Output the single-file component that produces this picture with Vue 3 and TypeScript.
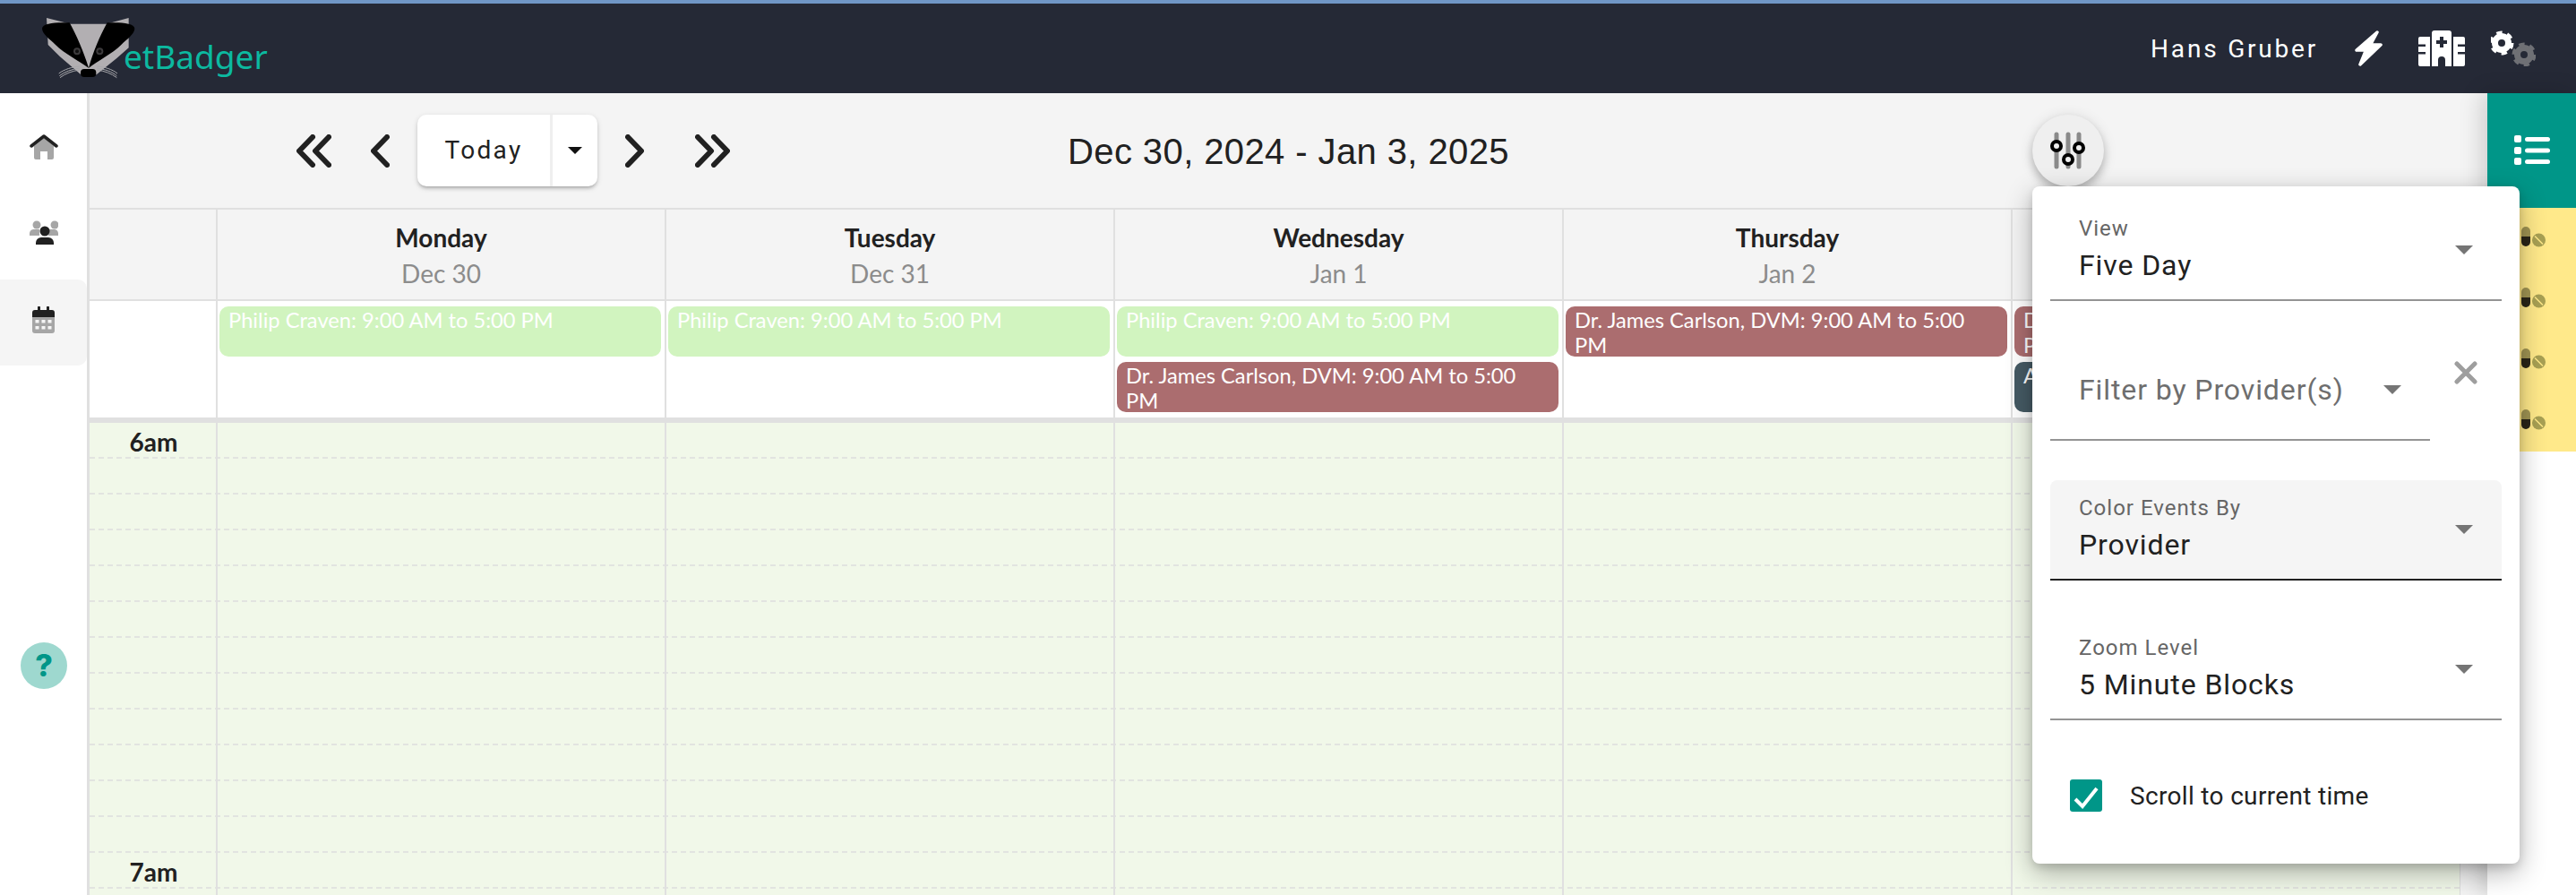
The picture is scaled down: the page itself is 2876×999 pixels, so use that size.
<script setup lang="ts">
interface Ev { text: string; kind: string }
interface Day { name: string; date: string; events: Ev[] }
const philip = 'Philip Craven: 9:00 AM to 5:00 PM'
const james = 'Dr. James Carlson, DVM: 9:00 AM to 5:00 PM'
const days: Day[] = [
  { name: 'Monday', date: 'Dec 30', events: [{ text: philip, kind: 'green' }] },
  { name: 'Tuesday', date: 'Dec 31', events: [{ text: philip, kind: 'green' }] },
  { name: 'Wednesday', date: 'Jan 1', events: [{ text: philip, kind: 'green' }, { text: james, kind: 'red' }] },
  { name: 'Thursday', date: 'Jan 2', events: [{ text: james, kind: 'red' }] },
  { name: '', date: '', events: [{ text: james, kind: 'red' }, { text: 'A', kind: 'slate' }] },
]
const rows: string[] = Array.from({ length: 14 }, (_, i) => (i === 0 ? '6am' : i === 12 ? '7am' : ''))
</script>

<template>
  <div class="app">
    <header class="topbar">
      <div class="brand">
        <svg class="badger" width="104" height="68" viewBox="140 60 312 204">
          <path d="M155 60 L235 80 H355 L430 60 V160 L390 195 L322 250 H270 L200 190 L160 150 Z" fill="#b2afb2" />
          <path d="M232 76 C190 74 140 76 140 96 C142 116 165 130 185 150 C215 180 265 205 296 228 C278 170 258 125 232 76 Z" fill="#000" />
          <path d="M358 76 C400 74 450 76 450 96 C448 116 425 130 405 150 C375 180 325 205 296 228 C312 170 332 125 358 76 Z" fill="#000" />
          <circle cx="257" cy="172" r="12" fill="#3c3a3c" /><circle cx="257" cy="172" r="6" fill="#111" />
          <circle cx="333" cy="172" r="12" fill="#3c3a3c" /><circle cx="333" cy="172" r="6" fill="#111" />
          <rect x="269" y="231" width="52" height="27" rx="12" fill="#000" />
          <g fill="none" stroke="#a8a8ac" stroke-width="3">
            <path d="M266 222 C240 224 215 232 196 246" /><path d="M266 228 C240 232 215 240 198 254" /><path d="M266 234 C240 238 218 246 200 260" />
            <path d="M324 222 C350 224 375 232 392 246" /><path d="M324 228 C350 232 375 240 390 254" /><path d="M324 234 C350 238 372 246 390 260" />
          </g>
        </svg>
        <span class="brand-text">etBadger</span>
      </div>
      <div class="user">
        <span class="user-name">Hans Gruber</span>
        <svg class="bolt" width="31" height="40" viewBox="0 0 31 40"><path d="M25 2 L2 22 H12.5 L6 38 L29 16 H17.5 Z" fill="#fff" stroke="#fff" stroke-width="3.5" stroke-linejoin="round" /></svg>
        <svg class="hospital" width="52" height="40" viewBox="0 0 52 40">
          <path d="M2 7 H13 V40 H2 a2 2 0 0 1 -2 -2 V9 a2 2 0 0 1 2 -2 Z M39 7 H50 a2 2 0 0 1 2 2 V38 a2 2 0 0 1 -2 2 H39 Z" fill="#fff" />
          <path d="M18 0 H34 a3 3 0 0 1 3 3 V40 H15 V3 a3 3 0 0 1 3 -3 Z" fill="#fff" />
          <path d="M24 7 h4 v4 h4 v4 h-4 v4 h-4 v-4 h-4 v-4 h4 Z M22 40 V33 a4 4 0 0 1 8 0 V40 Z M0 15.5 h8 v2.5 h-8 Z M0 24 h8 v2.5 h-8 Z M44 15.5 h8 v2.5 h-8 Z M44 24 h8 v2.5 h-8 Z" fill="#252936" />
        </svg>
        <svg class="gears" width="50" height="40" viewBox="0 0 50 40">
          <g fill="none">
            <circle cx="37" cy="27" r="7.5" stroke="#6f7075" stroke-width="7" />
            <circle cx="37" cy="27" r="11" stroke="#6f7075" stroke-width="5" stroke-dasharray="6 5.52" />
            <circle cx="12" cy="14" r="7.5" stroke="#fff" stroke-width="7" />
            <circle cx="12" cy="14" r="11" stroke="#fff" stroke-width="5" stroke-dasharray="6 5.52" />
          </g>
        </svg>
      </div>
    </header>

    <div class="body">
      <nav class="sidebar">
        <div class="side-item">
          <svg width="32" height="30" viewBox="0 0 32 30">
            <path d="M5 14 L16 5 L27 14 V27 a2 2 0 0 1 -2 2 H20 V20 H12 V29 H7 a2 2 0 0 1 -2 -2 Z" fill="#a6a6a6" />
            <path d="M2 14 L16 3 L30 14" fill="none" stroke="#212121" stroke-width="3.5" stroke-linecap="round" stroke-linejoin="round" />
          </svg>
        </div>
        <div class="side-item shifted">
          <svg width="32" height="30" viewBox="0 0 32 30">
            <circle cx="8" cy="6" r="4.5" fill="#a6a6a6" /><circle cx="28" cy="6" r="4.5" fill="#a6a6a6" />
            <path d="M0 18 V15 a5 5 0 0 1 5 -4 H11 V18 Z M21 11 H27 a5 5 0 0 1 5 4 V18 H21 Z" fill="#a6a6a6" />
            <circle cx="17" cy="13" r="5.5" fill="#212121" />
            <path d="M7 28 V26 a6 6 0 0 1 6 -6 H21 a6 6 0 0 1 6 6 V28 Z" fill="#212121" />
          </svg>
        </div>
        <div class="side-item active">
          <svg width="26" height="30" viewBox="0 0 26 30">
            <path d="M0 12 H25 V27 a3 3 0 0 1 -3 3 H3 a3 3 0 0 1 -3 -3 Z" fill="#a6a6a6" />
            <path d="M3 4 H6 V1 a1 1 0 0 1 3 0 V4 H16 V1 a1 1 0 0 1 3 0 V4 H22 a3 3 0 0 1 3 3 V12 H0 V7 a3 3 0 0 1 3 -3 Z" fill="#212121" />
            <g fill="#f5f5f5"><rect x="3.5" y="15" width="4" height="3.5" /><rect x="10.5" y="15" width="4" height="3.5" /><rect x="17.5" y="15" width="4" height="3.5" /><rect x="3.5" y="22" width="4" height="3.5" /><rect x="10.5" y="22" width="4" height="3.5" /><rect x="17.5" y="22" width="4" height="3.5" /></g>
          </svg>
        </div>
        <div class="help">?</div>
      </nav>

      <main class="main">
        <div class="toolbar">
          <div class="nav">
            <svg class="nav-dbl" width="39" height="37" viewBox="0 0 39 37"><path d="M18 3 L3 18.5 L18 34 M36 3 L21 18.5 L36 34" fill="none" stroke="#212121" stroke-width="6" stroke-linecap="round" stroke-linejoin="round" /></svg>
            <svg class="nav-one" width="21" height="37" viewBox="0 0 21 37"><path d="M18 3 L3 18.5 L18 34" fill="none" stroke="#212121" stroke-width="6" stroke-linecap="round" stroke-linejoin="round" /></svg>
            <div class="today">
              <span class="today-text">Today</span>
              <span class="today-drop"><i class="tri small"></i></span>
            </div>
            <svg class="nav-one right" width="21" height="37" viewBox="0 0 21 37"><path d="M3 3 L18 18.5 L3 34" fill="none" stroke="#212121" stroke-width="6" stroke-linecap="round" stroke-linejoin="round" /></svg>
            <svg class="nav-dbl right" width="39" height="37" viewBox="0 0 39 37"><path d="M3 3 L18 18.5 L3 34 M21 3 L36 18.5 L21 34" fill="none" stroke="#212121" stroke-width="6" stroke-linecap="round" stroke-linejoin="round" /></svg>
          </div>
          <div class="range">Dec 30, 2024 - Jan 3, 2025</div>
          <div class="tools">
            <div class="filter-btn">
              <svg width="44" height="44" viewBox="0 0 44 44">
                <g stroke="#8a8a8a" stroke-width="5" stroke-linecap="round"><path d="M9 4 V40" /><path d="M22 4 V40" /><path d="M34 4 V40" /></g>
                <g fill="#efefef" stroke="#000" stroke-width="4"><circle cx="9" cy="17" r="5" /><circle cx="22" cy="32" r="5" /><circle cx="34" cy="19" r="5" /></g>
              </svg>
            </div>
          </div>
        </div>

        <div class="cal-wrap">
          <div class="calendar">
            <div class="head-row">
              <div class="head-time"></div>
              <div v-for="(d, i) in days" :key="i" class="head-cell">
                <div class="head-name">{{ d.name }}</div>
                <div class="head-date">{{ d.date }}</div>
              </div>
            </div>
            <div class="allday-row">
              <div class="allday-time"></div>
              <div v-for="(d, i) in days" :key="i" class="allday-cell">
                <div v-for="(e, j) in d.events" :key="j" class="event" :class="e.kind">{{ e.text }}</div>
              </div>
            </div>
            <div class="grid">
              <div v-for="(r, i) in rows" :key="i" class="grid-row">
                <div class="time">{{ r }}</div>
                <div v-for="n in 5" :key="n" class="slot"></div>
              </div>
            </div>
          </div>
          <div class="scroll"></div>
        </div>
      </main>

      <aside class="rail">
        <div class="rail-top">
          <svg width="40" height="34" viewBox="0 0 40 34" fill="#fff">
            <rect x="0" y="0" width="8" height="8" rx="2" /><rect x="0" y="13" width="8" height="8" rx="2" /><rect x="0" y="25" width="8" height="8" rx="2" />
            <rect x="12" y="2" width="28" height="5" rx="2.5" /><rect x="12" y="14.5" width="28" height="5" rx="2.5" /><rect x="12" y="27" width="28" height="5" rx="2.5" />
          </svg>
        </div>
        <div v-for="n in 4" :key="n" class="rail-row">
          <svg width="27" height="23" viewBox="0 0 27 23">
            <path d="M0 11 V5 a5 5 0 0 1 10 0 V11 Z" fill="#a09453" />
            <path d="M0 11 H10 V17 a5 5 0 0 1 -10 0 Z" fill="#2a2518" />
            <circle cx="19.5" cy="15" r="7.5" fill="#a8a053" />
            <path d="M15 10.5 L24 19.5" stroke="#ffe98a" stroke-width="1.5" />
          </svg>
        </div>
      </aside>

      <section class="panel">
        <div class="field">
          <div class="field-text"><div class="label">View</div><div class="value">Five Day</div></div>
          <i class="tri"></i>
        </div>
        <div class="filter-row">
          <div class="field narrow">
            <div class="field-text"><div class="placeholder">Filter by Provider(s)</div></div>
            <i class="tri"></i>
          </div>
          <svg class="clear" width="26" height="26" viewBox="0 0 26 26"><path d="M3 3 L23 23 M23 3 L3 23" stroke="#9e9e9e" stroke-width="5" stroke-linecap="round" /></svg>
        </div>
        <div class="field filled">
          <div class="field-text"><div class="label">Color Events By</div><div class="value">Provider</div></div>
          <i class="tri"></i>
        </div>
        <div class="field">
          <div class="field-text"><div class="label">Zoom Level</div><div class="value">5 Minute Blocks</div></div>
          <i class="tri"></i>
        </div>
        <label class="check">
          <svg width="36" height="36" viewBox="0 0 36 36"><rect width="36" height="36" rx="3" fill="#009688" /><path d="M6 22 L14 30 L30 10" fill="none" stroke="#fff" stroke-width="4" /></svg>
          <span>Scroll to current time</span>
        </label>
      </section>
    </div>
  </div>
</template>

<style>
html, body { margin: 0; background: #fff; }
</style>

<style scoped>
.app { width: 2876px; height: 999px; overflow: hidden; display: flex; flex-direction: column; font-family: Roboto, sans-serif; color: #212121; border-top: 4px solid #7096c6; box-sizing: border-box; }
.topbar { height: 100px; flex: none; background: #252936; display: flex; align-items: center; justify-content: space-between; padding: 0 45px 0 47px; }
.brand { display: flex; align-items: flex-start; height: 100px; }
.badger { margin-top: 16px; margin-right: -13px; flex: none; }
.brand-text { font-family: "Noto Sans", sans-serif; font-size: 37px; line-height: 54px; margin-top: 32px; color: #0cb9a0; }
.user { display: flex; align-items: center; }
.user-name { color: #fff; font-size: 28px; letter-spacing: 2.8px; margin-right: 41px; }
.bolt { margin-right: 40px; }
.hospital { margin-right: 29px; }
.body { flex: 1; display: flex; position: relative; min-height: 0; }
.sidebar { width: 97px; flex: none; border-right: 3px solid #e0e0e0; background: #fff; padding-top: 12px; display: flex; flex-direction: column; gap: 2px; align-items: stretch; }
.side-item { height: 96px; box-sizing: border-box; display: flex; align-items: center; justify-content: center; border-radius: 0 10px 10px 0; }
.side-item.shifted { padding-bottom: 4px; }
.side-item.active { background: #f5f5f5; padding-bottom: 6px; }
.help { width: 52px; height: 52px; border-radius: 50%; background: #9ed8cf; color: #009688; font-family: Inter, sans-serif; font-weight: 800; font-size: 34px; line-height: 52px; text-align: center; margin: 307px 0 0 23px; }
.main { flex: 1; min-width: 0; display: flex; flex-direction: column; background: #fff; }
.toolbar { height: 128px; flex: none; background: #f4f4f4; display: grid; grid-template-columns: 1fr auto 1fr; align-items: center; }
.nav { display: flex; align-items: center; padding-left: 231px; }
.nav-dbl { margin-right: 44px; }
.nav-one { margin-right: 31px; }
.nav-one.right { margin-right: 57px; margin-left: 31px; }
.nav-dbl.right { margin-right: 0; }
.today { display: flex; width: 201px; height: 80px; background: #fff; border-radius: 10px; box-shadow: 0 3px 4px -2px rgba(0,0,0,.3), 0 2px 6px rgba(0,0,0,.14); }
.today-text { width: 151px; font-size: 28px; letter-spacing: 2.3px; text-align: center; line-height: 80px; border-right: 3px solid #efefef; box-sizing: border-box; }
.today-drop { flex: 1; display: flex; align-items: center; justify-content: center; }
.tri { display: block; width: 0; height: 0; flex: none; border-left: 10px solid transparent; border-right: 10px solid transparent; border-top: 10px solid #757575; }
.tri.small { border-left-width: 8px; border-right-width: 8px; border-top: 8px solid #111; }
.range { font-family: "Liberation Sans", sans-serif; font-size: 40px; line-height: 48px; letter-spacing: .4px; color: #212121; white-space: nowrap; padding-top: 2px; }
.tools { display: flex; justify-content: flex-end; padding-right: 428px; }
.filter-btn { width: 80px; height: 80px; border-radius: 50%; background: #efefef; display: flex; align-items: center; justify-content: center; box-shadow: 0 6px 10px rgba(0,0,0,.2), 0 2px 16px rgba(0,0,0,.12); }
.cal-wrap { flex: 1; min-height: 0; display: flex; }
.calendar { flex: 1; min-width: 0; display: flex; flex-direction: column; font-family: Lato, sans-serif; }
.scroll { width: 31px; flex: none; background: #f4f4f4; border-left: 1px solid #ddd; box-sizing: border-box; }
.head-row, .allday-row, .grid-row { display: grid; grid-template-columns: 141px repeat(5, 1fr); }
.head-row { height: 104px; box-sizing: border-box; background: #f4f4f4; border-top: 2px solid #e0e0e0; border-bottom: 2px solid #e0e0e0; }
.head-cell { border-left: 2px solid #e0e0e0; padding-top: 11px; text-align: center; }
.head-name { font-size: 28px; font-weight: 700; line-height: 40px; color: #212121; }
.head-date { font-size: 28px; line-height: 40px; color: #8c8c8c; }
.allday-row { height: 136px; box-sizing: border-box; border-bottom: 6px solid #e0e0e0; background: #fff; }
.allday-cell { border-left: 2px solid #e0e0e0; padding: 6px 4px 0 2px; display: flex; flex-direction: column; gap: 6px; min-width: 0; }
.event { height: 56px; box-sizing: border-box; border-radius: 10px; padding: 1px 10px 0; font-size: 23.7px; line-height: 28px; color: #fff; }
.event.green { background: #d1f4bf; }
.event.red { background: #ab6d6f; }
.event.slate { background: #455a64; }
.grid { flex: 1; min-height: 0; overflow: hidden; background: #f1f8e9; }
.grid-row { height: 40px; box-sizing: border-box; border-bottom: 2px dashed #e2e4e0; }
.time { font-size: 28px; font-weight: 700; line-height: 42px; text-align: center; padding-left: 2px; color: #212121; }
.slot { border-left: 2px solid #e0e0e0; margin-bottom: -2px; }
.rail { width: 99px; flex: none; background: #fff; display: flex; flex-direction: column; box-shadow: -6px 0 24px rgba(0,0,0,.16); z-index: 1; }
.rail-top { height: 128px; flex: none; background: #009688; display: flex; align-items: center; justify-content: center; }
.rail-row { height: 68px; flex: none; background: #ffe98a; display: flex; align-items: center; justify-content: center; padding: 0 0 4px 4px; box-sizing: border-box; }
.panel { position: absolute; z-index: 2; top: 104px; left: 2269px; width: 544px; height: 756px; box-sizing: border-box; padding: 16px 20px 0; background: #fff; border-radius: 8px; box-shadow: 0 10px 30px rgba(0,0,0,.3), 0 4px 10px rgba(0,0,0,.12); }
.field { height: 112px; box-sizing: border-box; border-bottom: 2px solid #949494; padding: 0 32px; display: flex; align-items: center; margin-bottom: 44px; }
.field.narrow { width: 424px; margin-bottom: 0; flex: none; }
.field.filled { background: #f5f5f5; border-radius: 8px 8px 0 0; border-bottom-color: #212121; }
.field-text { flex: 1; min-width: 0; }
.label { font-size: 24px; line-height: 30px; letter-spacing: 1px; color: #666; }
.value { font-size: 32px; line-height: 44px; margin-top: 4px; letter-spacing: .9px; color: #212121; }
.placeholder { font-size: 32px; line-height: 44px; letter-spacing: .9px; color: #6e6e6e; }
.filter-row { display: flex; align-items: flex-start; margin-bottom: 44px; }
.clear { margin: 23px 0 0 27px; }
.check { display: flex; align-items: center; padding: 22px 0 0 22px; font-size: 28px; letter-spacing: .33px; gap: 31px; color: #212121; }
</style>
